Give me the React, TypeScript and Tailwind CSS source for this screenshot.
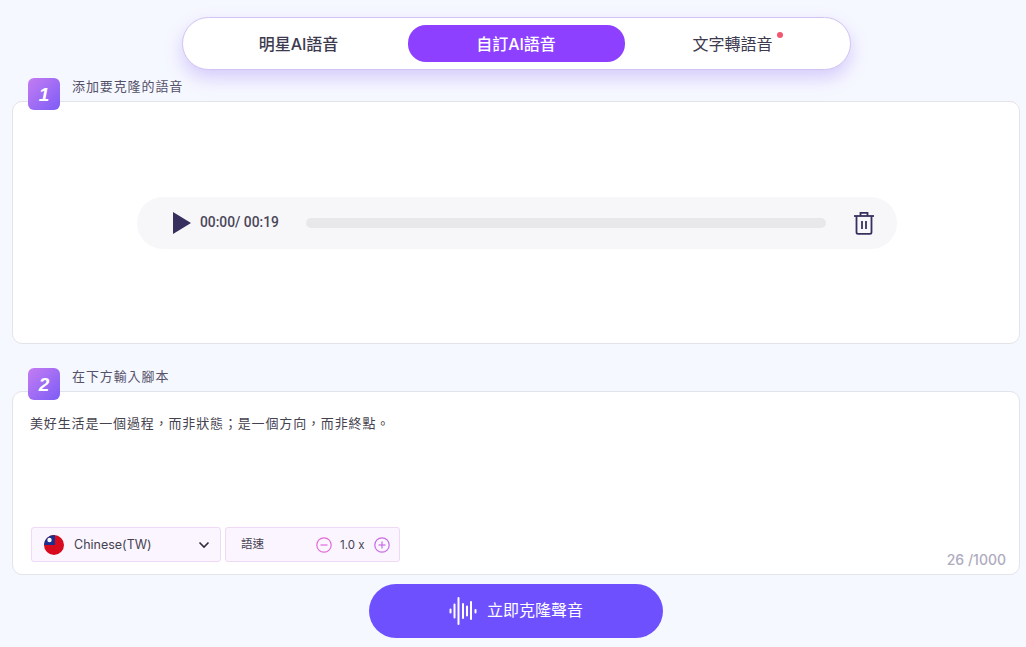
import React from "react";

const Badge = ({ n }: { n: string }) => (
  <div className="relative z-10 flex h-[32px] w-[32px] items-center justify-center rounded-[6px] bg-gradient-to-br from-[#c57bf2] to-[#7d5cf6] font-['Liberation_Sans',sans-serif] text-[19px] font-bold italic leading-none text-white">
    {n}
  </div>
);

const Header = ({ n, label }: { n: string; label: string }) => (
  <div className="mb-[-9px] flex h-[32px] items-start pl-[16px]">
    <Badge n={n} />
    <span className="ml-[12px] mt-[-1px] text-[13px] leading-[18px] tracking-[0.9px] text-[#55516a]">{label}</span>
  </div>
);

const Flag = () => (
  <svg width="20" height="20" viewBox="0 0 20 20" className="shrink-0">
    <defs>
      <clipPath id="flagclip"><circle cx="10" cy="10" r="10" /></clipPath>
    </defs>
    <g clipPath="url(#flagclip)">
      <rect width="20" height="20" fill="#d80a1e" />
      <rect width="11" height="10" fill="#1b2f8f" />
      <circle cx="5.5" cy="5" r="2.2" fill="#ffffff" />
    </g>
  </svg>
);

const Round = ({ plus, color }: { plus?: boolean; color: string }) => (
  <svg width="16" height="16" viewBox="0 0 16 16" fill="none" stroke={color} strokeWidth="1.2">
    <circle cx="8" cy="8" r="7.2" />
    <path d="M4.5 8h7" />
    {plus && <path d="M8 4.500v7" />}
  </svg>
);

export default function App() {
  return (
    <div className="flex h-[647px] w-[1026px] flex-col overflow-hidden bg-[#f6f8ff] pl-[12px] pr-[6px] pt-[17px] font-['Inter','Noto_Sans_CJK_TC',sans-serif]">
      <div className="flex h-[53px] w-[669px] shrink-0 items-center self-center rounded-[27px] border border-[#d3c3f3] bg-white px-[7px] shadow-[0_8px_18px_rgba(130,90,240,0.28)]">
        <div className="flex w-[218px] justify-center text-[16px] font-medium text-[#3d3a50]">明星AI語音</div>
        <div className="flex h-[37px] w-[217px] items-center justify-center rounded-[18px] bg-[#8d40ff] text-[16px] font-medium text-white">自訂AI語音</div>
        <div className="relative flex w-[216px] justify-center text-[16px] text-[#3d3a50]">
          <span className="relative">
            文字轉語音
            <span className="absolute right-[-10px] top-[0px] h-[6px] w-[6px] rounded-full bg-[#f4566f]" />
          </span>
        </div>
      </div>

      <div className="mt-[8px]">
        <Header n="1" label="添加要克隆的語音" />
      </div>
      <div className="flex h-[243px] shrink-0 items-center justify-center rounded-[10px] border border-[#e3e3ea] bg-white">
        <div className="ml-[2px] flex h-[52px] w-[760px] items-center rounded-[26px] bg-[#f7f7fa] pl-[36px]">
          <svg width="18" height="22" viewBox="0 0 18 22" className="shrink-0">
            <path d="M0 0L18 11L0 22Z" fill="#37305f" />
          </svg>
          <span className="ml-[9px] w-[106px] font-['Roboto',sans-serif] text-[13.800px] font-medium text-[#4a4658]">00:00/ 00:19</span>
          <div className="h-[10px] w-[520px] rounded-[5px] bg-[#e8e8ea]" />
          <svg width="22" height="24" viewBox="0 0 22 24" fill="none" stroke="#37305f" strokeWidth="1.8" className="ml-[27px] shrink-0">
            <path d="M1 5h20" />
            <path d="M7.500 5V1.800h7V5" />
            <path d="M3.500 5v16.200a1.600 1.600 0 0 0 1.600 1.600h11.800a1.600 1.600 0 0 0 1.600-1.600V5" />
            <path d="M9 10v8M13 10v8" />
          </svg>
        </div>
      </div>

      <div className="mt-[24px]">
        <Header n="2" label="在下方輸入腳本" />
      </div>
      <div className="flex h-[184px] shrink-0 flex-col rounded-[10px] border border-[#e3e3ea] bg-white">
        <p className="pl-[17px] pt-[22px] text-[13px] leading-[18px] tracking-[0.85px] text-[#45424f]">
          美好生活是一個過程，而非狀態；是一個方向，而非終點。
        </p>
        <div className="mt-auto flex items-end justify-between pb-[12px] pl-[18px] pr-[13px]">
          <div className="flex gap-[4px]">
            <div className="flex h-[35px] w-[190px] items-center rounded-[3px] border border-[#efd9f6] bg-[#faf5ff] pl-[12px] pr-[10px]">
              <Flag />
              <span className="ml-[10px] mt-[2px] text-[12.500px] text-[#45424f]">Chinese(TW)</span>
              <svg width="12" height="8" viewBox="0 0 12 8" fill="none" stroke="#2f2c3a" strokeWidth="1.600" className="ml-auto">
                <path d="M1.500 1.500L6 6l4.500-4.500" />
              </svg>
            </div>
            <div className="flex h-[35px] w-[175px] items-center rounded-[3px] border border-[#efd9f6] bg-[#faf5ff] pl-[15px] pr-[9px]">
              <span className="mt-[1px] text-[11.500px] text-[#45424f]">語速</span>
              <span className="ml-auto flex"><Round color="#e26ad8" /></span>
              <span className="mx-[8px] mt-[2px] w-[26px] text-[11.500px] text-[#45424f]">1.0 x</span>
              <Round plus color="#c86ae6" />
            </div>
          </div>
          <span className="mb-[-8px] text-[14px] font-medium text-[#aeabbd]">26 /1000</span>
        </div>
      </div>

      <button className="mt-[9px] flex h-[54px] w-[294px] shrink-0 items-center justify-center self-center rounded-[27px] bg-[#6e50ff] text-[16px] text-white">
        <svg width="28" height="28" viewBox="0 0 28 28" fill="none" stroke="#ffffff" strokeWidth="2" strokeLinecap="round" className="mr-[10px]">
          <path d="M1.500 12.500v3M5.500 7.500v13M9.500 1v26M14 7v14M18 9.500v9M22 5v17M26.500 13v2.500" />
        </svg>
        <span className="mt-[-2px]">立即克隆聲音</span>
      </button>
    </div>
  );
}
